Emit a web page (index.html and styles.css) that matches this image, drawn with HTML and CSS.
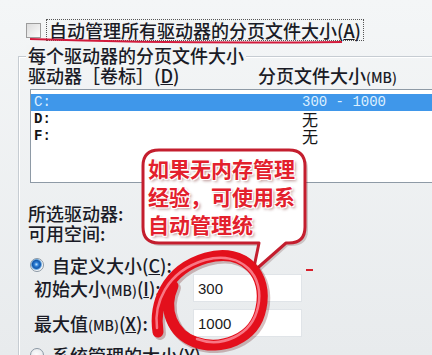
FILE: index.html
```html
<!DOCTYPE html>
<html lang="zh-CN">
<head>
    <meta charset="UTF-8">
    <title>虚拟内存</title>
    <link rel="stylesheet" href="styles.css">
</head>
<body>
    <div class="dialog">
        <div class="auto-row">
            <span class="checkbox"></span>
            <span class="auto-label">自动管理所有驱动器的分页文件大小(<u>A</u>)</span>
        </div>
        <div class="group">
            <div class="legend">每个驱动器的分页文件大小</div>
            <div class="cols">
                <span class="c1">驱动器［卷标］(<u>D</u>)</span>
                <span>分页文件大小<span class="mb">(MB)</span></span>
            </div>
            <div class="listbox">
                <div class="row selected"><span class="drive">C:</span><span>300 - 1000</span></div>
                <div class="row"><span class="drive">D:</span><span class="none">无</span></div>
                <div class="row"><span class="drive">F:</span><span class="none">无</span></div>
            </div>
            <div class="info">
                所选驱动器:<br>
                可用空间:
            </div>
            <div class="radio-row">
                <span class="radio checked"></span>
                <span>自定义大小(<u>C</u>):</span>
            </div>
            <div class="field first">
                <label>初始大小<span class="mb">(MB)</span>(<u>I</u>):</label>
                <input class="field-input" type="text" value="300">
            </div>
            <div class="field">
                <label>最大值<span class="mb">(MB)</span>(<u>X</u>):</label>
                <input class="field-input" type="text" value="1000">
            </div>
            <div class="radio-row second">
                <span class="radio"></span>
                <span>系统管理的大小(<u>Y</u>)</span>
            </div>
        </div>

        <!-- red annotations drawn on top of the dialog -->
        <svg class="overlay" width="432" height="355" viewBox="0 0 432 355">
            <path d="M30 39 Q 180 44 342 42" fill="none" stroke="#d21a3c" stroke-width="2"/>
            <path d="M161 153 H291 Q308 153 308 169 V230 Q308 246 291 246 H288 L256 275 L261 246 H161 Q146 246 146 230 V169 Q146 153 161 153 Z" fill="rgba(60,0,0,0.18)"/>
            <path d="M159 150 H289 Q305 150 305 166 V227 Q305 243 289 243 H286 L253 272 L259 243 H159 Q143 243 143 227 V166 Q143 150 159 150 Z" fill="#fff" stroke="#c41e2e" stroke-width="3" stroke-linejoin="round"/>
            <path d="M306 270 H313" stroke="#d8202c" stroke-width="2"/>
            <path d="M158 332 C 154 305, 165 270, 206 258 C 246 247, 268 276, 261 308 C 255 340, 220 351, 195 342 C 173 334, 162 310, 173 286" fill="none" stroke="rgba(90,0,0,0.25)" stroke-width="12" stroke-linecap="round" transform="translate(2 2)"/>
            <path d="M158 332 C 154 305, 165 270, 206 258 C 246 247, 268 276, 261 308 C 255 340, 220 351, 195 342 C 173 334, 162 310, 173 286" fill="none" stroke="#e3101c" stroke-width="11" stroke-linecap="round"/>
            <path d="M157 328 C 154 305, 165 272, 205 260 C 243 250, 265 277, 258 307 C 252 336, 221 348, 197 339" fill="none" stroke="#ff9aa8" stroke-width="2.5" stroke-linecap="round" opacity="0.75"/>
        </svg>
        <div class="callout-text">如果无内存管理<br>经验，可使用系<br>自动管理统</div>
    </div>
</body>
</html>
```

FILE: styles.css
```css
body {
    margin: 0;
    width: 432px;
    height: 355px;
    overflow: hidden;
    background: linear-gradient(#f4f6f7, #e8ebed);
    font-family: "Noto Sans CJK SC", sans-serif;
    font-size: 18px;
    font-weight: 500;
    color: #1a1b26;
}
.dialog {
    position: relative;
    height: 355px;
}
.auto-row {
    display: flex;
    align-items: center;
    padding: 19px 0 0 26px;
}
.checkbox {
    width: 13px;
    height: 13px;
    margin-right: 5px;
    border: 1px solid #9c9c9c;
    background: linear-gradient(135deg, #dcdcdc, #fbfbfb);
}
.auto-label {
    border: 1px dotted #555;
    padding: 0 2px;
    line-height: 20px;
}
.group {
    margin: 15px 0 0 18px;
    border-left: 1px solid #c6ccd2;
    border-top: 1px solid #c6ccd2;
    box-shadow: inset 1px 1px 0 #fff;
}
.legend {
    width: max-content;
    margin: -12px 0 0 7px;
    padding: 0 2px;
    line-height: 20px;
    background: #f2f4f5;
}
.cols {
    display: flex;
    padding-left: 9px;
    line-height: 20px;
}
.cols .c1 {
    width: 230px;
}
.mb {
    font-size: 14px;
}
.listbox {
    margin: 2px 0 0 11px;
    height: 94px;
    box-sizing: border-box;
    padding-top: 4px;
    border: 1px solid #8e9aa6;
    border-right: none;
    background: #fff;
    font-family: "Liberation Mono", monospace;
    font-size: 14px;
}
.row {
    display: flex;
    height: 17px;
    line-height: 17px;
    padding-left: 3px;
    font-weight: bold;
    color: #151515;
}
.row .drive {
    width: 268px;
}
.row.selected {
    background: #3f97ea;
    color: #dcefff;
    font-weight: normal;
}
.row .none {
    font-family: "Noto Sans CJK SC", sans-serif;
    font-size: 16px;
    font-weight: normal;
}
.info {
    margin-top: 20px;
    padding-left: 9px;
    line-height: 20px;
}
.radio-row {
    display: flex;
    align-items: center;
    margin-top: 12px;
    padding-left: 11px;
    line-height: 20px;
}
.radio-row.second {
    margin-top: 8px;
}
.radio {
    width: 12px;
    height: 12px;
    margin-right: 8px;
    border: 1px solid #8b98a4;
    border-radius: 50%;
    background: radial-gradient(circle at 45% 45%, #fdfdfd, #dfe3e7);
}
.radio.checked {
    background: radial-gradient(circle at 45% 45%, #bfe4ff 0, #2d7fd6 2px, #1456a8 4px, #6aa8e0 5px, #f4f6f8 6px);
}
.field {
    display: flex;
    align-items: center;
    margin-top: 7px;
    padding-left: 15px;
    height: 28px;
}
.field.first {
    margin-top: -1px;
}
.field label {
    width: 159px;
}
.field-input {
    width: 109px;
    height: 28px;
    box-sizing: border-box;
    margin: 0;
    padding: 0 4px;
    border: 1px solid #e0e4e8;
    background: #fff;
    font-family: "Liberation Sans", sans-serif;
    font-size: 15px;
    color: #1a1a1a;
}
.overlay {
    position: absolute;
    top: 0;
    left: 0;
}
.callout-text {
    position: absolute;
    left: 148px;
    top: 154px;
    font-size: 21px;
    font-weight: bold;
    line-height: 28px;
    color: #e3202c;
    text-shadow: -1px -1px 0 #fff, 1px -1px 0 #fff, -1px 1px 0 #fff, 1px 1px 0 #fff, 2px 2px 3px rgba(90, 0, 0, 0.45);
}
```
